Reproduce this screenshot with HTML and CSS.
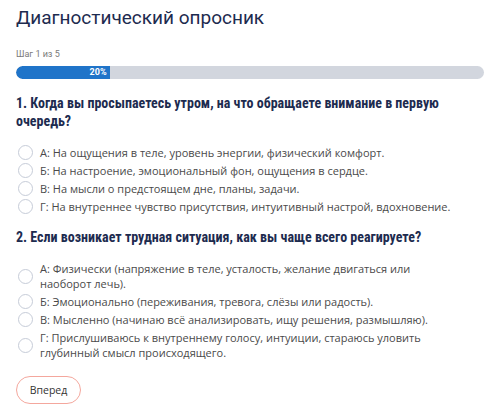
FILE: index.html
```html
<!DOCTYPE html>
<html lang="ru">
<head>
<meta charset="utf-8">
<link rel="stylesheet" href="styles.css">
</head>
<body>
<div class="page">
  <h1 class="title">Диагностический опросник</h1>
  <div class="step">Шаг 1 из 5</div>
  <div class="progress"><div class="fill" style="width:20%">20%</div></div>

  <h2 class="question">1. Когда вы просыпаетесь утром, на что обращаете внимание в первую очередь?</h2>
  <ul class="options">
    <li class="option"><span class="radio"></span><span class="label">А: На ощущения в теле, уровень энергии, физический комфорт.</span></li>
    <li class="option"><span class="radio"></span><span class="label">Б: На настроение, эмоциональный фон, ощущения в сердце.</span></li>
    <li class="option"><span class="radio"></span><span class="label">В: На мысли о предстоящем дне, планы, задачи.</span></li>
    <li class="option"><span class="radio"></span><span class="label">Г: На внутреннее чувство присутствия, интуитивный настрой, вдохновение.</span></li>
  </ul>

  <h2 class="question">2. Если возникает трудная ситуация, как вы чаще всего реагируете?</h2>
  <ul class="options">
    <li class="option"><span class="radio"></span><span class="label">А: Физически (напряжение в теле, усталость, желание двигаться или наоборот лечь).</span></li>
    <li class="option"><span class="radio"></span><span class="label">Б: Эмоционально (переживания, тревога, слёзы или радость).</span></li>
    <li class="option"><span class="radio"></span><span class="label">В: Мысленно (начинаю всё анализировать, ищу решения, размышляю).</span></li>
    <li class="option"><span class="radio"></span><span class="label">Г: Прислушиваюсь к внутреннему голосу, интуиции, стараюсь уловить глубинный смысл происходящего.</span></li>
  </ul>

  <button class="next">Вперед</button>
</div>
</body>
</html>
```
FILE: styles.css
```css
* { box-sizing: border-box; }
html, body { margin: 0; padding: 0; background: #fff; }
.page {
  padding: 4px 16px 10px 16px;
  font-family: "Open Sans", "Liberation Sans", sans-serif;
}
.title {
  margin: 0;
  font-family: Roboto, "Liberation Sans", sans-serif;
  font-weight: 400;
  font-size: 19px;
  line-height: 28px;
  color: #1d2b4f;
}
.step {
  margin-top: 16px;
  font-size: 9px;
  line-height: 12px;
  color: #7a7a7a;
  font-family: Roboto, sans-serif;
}
.progress {
  margin-top: 6px;
  height: 13px;
  width: 468px;
  background: #d2d6de;
  border-radius: 7px;
  overflow: hidden;
}
.fill {
  height: 100%;
  background: #1f74c9;
  color: #fff;
  font-family: Roboto, sans-serif;
  font-weight: 700;
  font-size: 9px;
  line-height: 13px;
  text-align: right;
  padding-right: 3px;
  border-radius: 7px 0 0 7px;
}
.question {
  margin: 15px 0 0 0;
  font-family: "Roboto Condensed", "Liberation Sans Narrow", "DejaVu Sans Condensed", sans-serif;
  font-weight: 700;
  font-size: 14px;
  line-height: 18px;
  color: #1d2b4f;
}
.question + .options { margin-top: 15px; }
.options + .question { margin-top: 14px; }
.options {
  list-style: none;
  margin: 0;
  padding: 0 0 0 2px;
  max-width: 444px;
  display: flex;
  flex-direction: column;
  gap: 3px;
}
.option {
  display: flex;
  align-items: center;
  gap: 7px;
  min-height: 15px;
}
.radio {
  flex: none;
  width: 15px;
  height: 15px;
  border: 1px solid #c6ccd8;
  border-radius: 50%;
  background: #fff;
}
.label {
  font-size: 11px;
  line-height: 15px;
  color: #4a4a4a;
}
.next {
  display: block;
  margin-top: 16px;
  width: 65px;
  height: 28px;
  border: 1px solid #f4a79d;
  border-radius: 14px;
  background: #fff;
  font-family: "Open Sans", sans-serif;
  font-size: 10.5px;
  color: #333;
  padding: 0;
}
```
